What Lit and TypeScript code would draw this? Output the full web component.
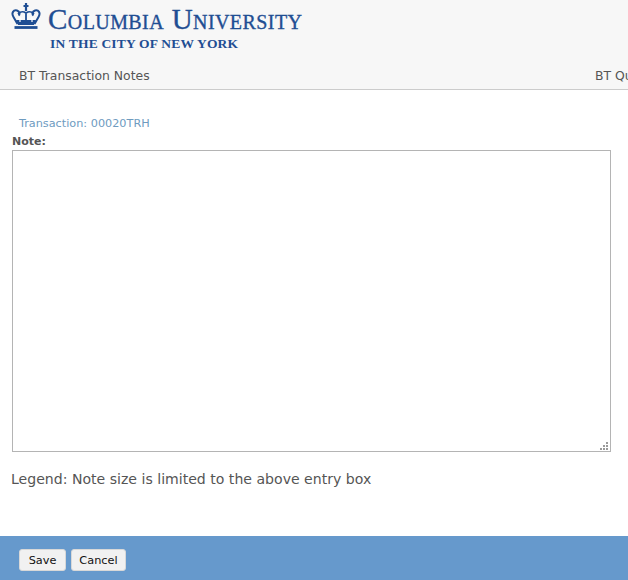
import { LitElement, html, css } from "lit";
import { customElement } from "lit/decorators.js";

@customElement("app-root")
export class AppRoot extends LitElement {
  static styles = css`
    :host { display: block; width: 628px; height: 580px; overflow: hidden; background: #fff; font-family: "DejaVu Sans", Verdana, sans-serif; color: #555; }
    .page { display: flex; flex-direction: column; height: 580px; }
    .header { height: 89px; flex: none; background: #f7f7f7; border-bottom: 1px solid #ccc; display: flex; flex-direction: column; overflow: hidden; }
    .brand { display: flex; height: 60px; flex: none; padding: 3px 0 0 11px; box-sizing: border-box; gap: 7px; color: #1f4e93; font-family: "Liberation Serif", serif; }
    .crown { width: 30px; height: 27px; flex: none; }
    .words { display: flex; flex-direction: column; }
    .name { font-size: 29px; line-height: 33px; font-variant: small-caps; white-space: nowrap; letter-spacing: 0.42px; -webkit-text-stroke: 0.35px #1f4e93; }
    .city { font-size: 13.5px; line-height: 16px; font-weight: 700; margin: 0 0 0 2px; white-space: nowrap; letter-spacing: 0.2px; }
    .tabs { display: flex; font-size: 12.4px; line-height: 16px; padding: 8px 0 0 19px; white-space: nowrap; color: #555; }
    .tab-left { width: 576px; flex: none; }
    .content { flex: 1; display: flex; flex-direction: column; padding: 27px 17px 0 12px; min-height: 0; }
    .txn { font-size: 11.25px; line-height: 14px; color: #6e9bbf; padding-left: 7px; }
    .label { font-size: 11px; line-height: 13px; font-weight: 700; color: #555; margin-top: 4px; }
    .box { position: relative; width: 599px; height: 302px; margin-top: 2px; }
    textarea { display: block; box-sizing: border-box; width: 599px; height: 302px; margin: 0; border: 1px solid #b4b4b4; background: #fff; padding: 2px; outline: none; resize: none; }
    .grip { position: absolute; right: 1px; bottom: 1px; width: 10px; height: 10px; }
    .legend { font-size: 14.08px; line-height: 18px; margin: 18px 0 0 -1px; color: #555; }
    .footer { height: 44px; flex: none; background: #6699cc; display: flex; align-items: center; gap: 5px; padding: 3px 0 0 19px; box-sizing: border-box; }
    button { height: 22px; padding: 2px 0 0; border: 1px solid #d8d8d8; border-radius: 3px; background: #f1f1f1; color: #111; font: 11.3px "DejaVu Sans", Verdana, sans-serif; }
    .save { width: 47px; }
    .cancel { width: 55px; }
  `;

  render() {
    return html`
      <div class="page">
        <div class="header">
          <div class="brand">
            <svg class="crown" viewBox="0 0 30 27" fill="none" stroke="#1f4e93">
              <path d="M15 0v8M12.500 3h5" stroke-width="2.200"/>
              <path d="M6.500 21 2.500 14c-2.500-4 0-7.500 3.500-6.500 3 1 3 4 1.500 5M23.500 21l4-7c2.500-4 0-7.500-3.500-6.500-3 1-3 4-1.500 5" stroke-width="2"/>
              <path d="M7 11c3-3 5-3 8-1 3-2 5-2 8 1M15 10v7" stroke-width="1.800"/>
              <path d="M5 17h20l-2 5H7z" fill="#1f4e93" stroke="none"/>
              <path d="M9 14v5M7 16h4M21 14v5M19 16h4" stroke="#fff" stroke-width="1.200"/>
              <path d="M3.500 24.500h23" stroke-width="2.800"/>
            </svg>
            <div class="words">
              <div class="name">Columbia University</div>
              <div class="city">IN THE CITY OF NEW YORK</div>
            </div>
          </div>
          <div class="tabs"><span class="tab-left">BT Transaction Notes</span><span>BT Quick Links</span></div>
        </div>
        <div class="content">
          <div class="txn">Transaction: 00020TRH</div>
          <div class="label">Note:</div>
          <div class="box">
            <textarea aria-label="Note"></textarea>
            <svg class="grip" viewBox="0 0 10 10" fill="#9a9a9a">
              <rect x="6" y="1" width="2" height="2"/>
              <rect x="3" y="4" width="2" height="2"/><rect x="6" y="4" width="2" height="2"/>
              <rect x="0" y="7" width="2" height="2"/><rect x="3" y="7" width="2" height="2"/><rect x="6" y="7" width="2" height="2"/>
            </svg>
          </div>
          <div class="legend">Legend: Note size is limited to the above entry box</div>
        </div>
        <div class="footer"><button class="save">Save</button><button class="cancel">Cancel</button></div>
      </div>
    `;
  }
}
